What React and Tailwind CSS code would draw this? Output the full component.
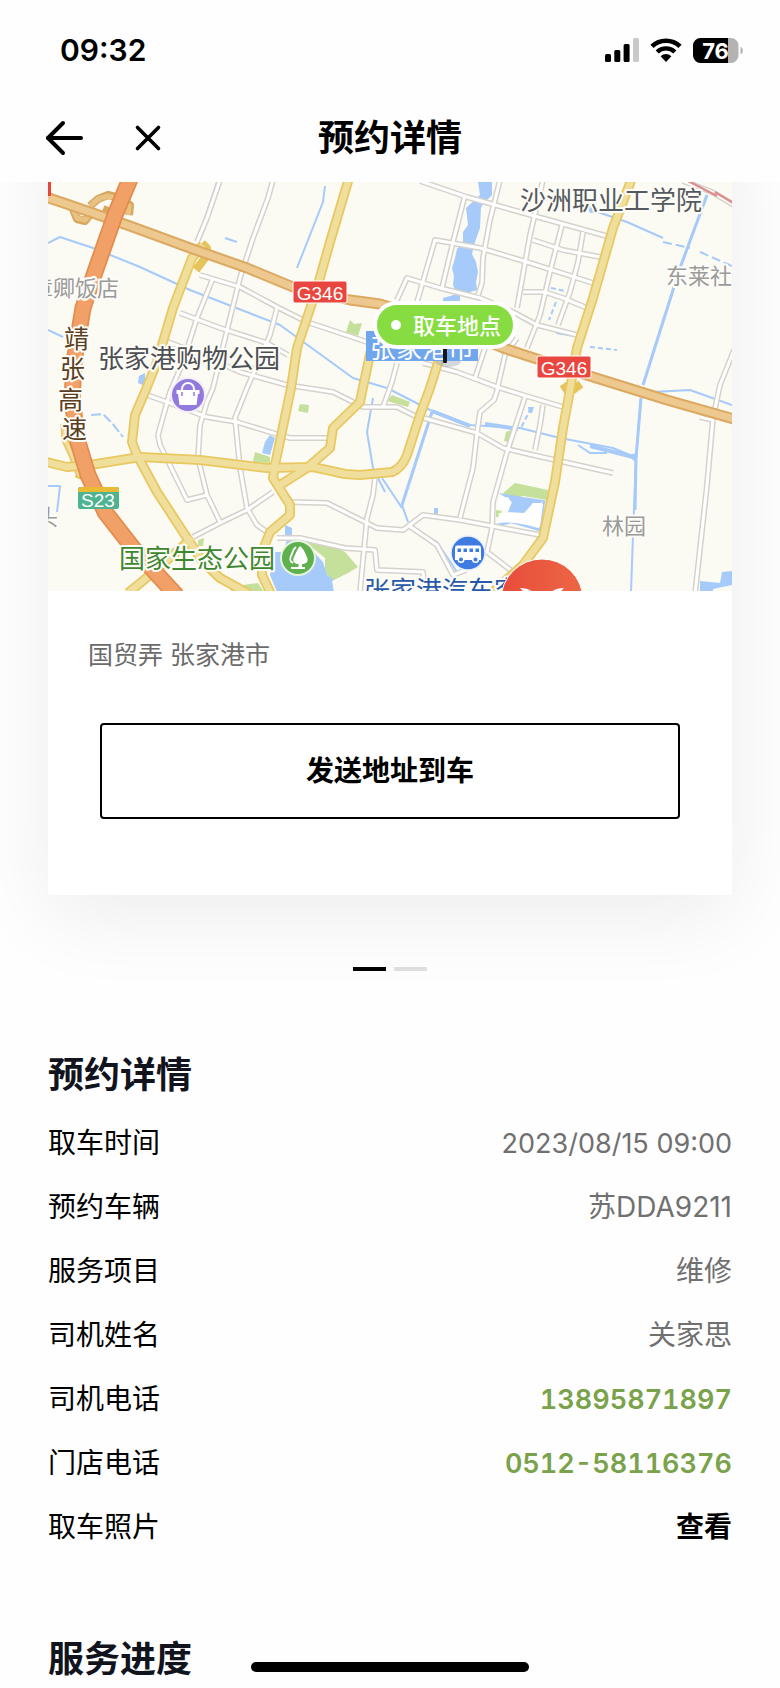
import React, { useState } from "react";

const majorRoads = [
  "M203 245 L192 258 L173 308 L157 362 L147 387 L135 415 L132 442 L137 455 L157 492 L187 538 L203 562 L220 578 L249 594",
  "M192 538 L173 555 L150 575 L128 593",
  "M46 462 L67 467 L90 465 L140 457 L200 460 L267 468 L313 467 L345 474 L360 475 L392 472 Q402 468 407 455 L420 415 L430 388 L442 350",
  "M349 178 L330 242 L317 288 L297 348 L291 388 L275 465 L273 478 L290 505 L290 515 L270 532 L262 552 L262 575 L271 594",
  "M372 345 L362 392 L360 402 L333 428 L330 448 L307 468 L280 485",
  "M632 178 L613 228 L593 298 L577 348 L570 390 L563 428 L555 482 L543 538 L523 565 L493 592",
];

const minorRoads = [
  "M220 180 L207 218 L197 242",
  "M273 180 L268 198 L253 238 L240 278 L230 318 L213 388 L207 402 L200 425 L198 458 L207 495 L220 522",
  "M200 275 L240 287 L277 307 L307 322 L367 342",
  "M180 313 L220 328 L267 343 L288 355",
  "M168 342 L207 357 L240 372 L287 385 L333 392 L363 407 L397 407 L413 415 L477 433 L503 448 L533 455 L613 473",
  "M213 278 L197 318 L183 362 L170 392 L158 435 L160 445 L187 500 L207 495",
  "M277 308 L270 335 L247 388 L235 418 L240 468 L247 508 L257 525 L267 532",
  "M147 395 L167 402 L207 417 L237 422 L273 433 L290 438 L327 438",
  "M193 537 L220 523 L247 510 L273 492",
  "M290 502 L327 503 L357 518 L377 528 L403 530 L423 515 L460 520 L540 535",
  "M277 538 L300 538 L345 548 L375 550 L377 570 L423 572 L425 592",
  "M375 478 L373 495 L367 518 L360 592",
  "M408 525 L437 545 L453 575 L466 570",
  "M498 388 L494 400 L480 412 L477 433 L473 468 L460 518",
  "M525 397 L507 452 L493 502 L492 528 L487 552 L513 572",
  "M543 405 L540 425 L535 450",
  "M423 363 L457 372 L497 387 L523 395 L563 407",
  "M420 181 L467 197 L520 212 L610 237",
  "M465 195 L453 242 L442 288",
  "M500 180 L490 220 L483 258 L482 283 L478 295",
  "M397 300 L407 278 L440 288 L480 298 L513 312 L537 325 L577 335",
  "M417 302 L435 240 L480 248 L527 262 L593 283",
  "M543 180 L530 235 L517 308",
  "M562 225 L550 272 L540 315 L527 348",
  "M583 232 L578 262 L570 292 L558 325",
  "M533 240 L563 250 L600 257",
  "M523 292 L545 292 L563 298 L587 308",
  "M517 338 L505 355 L497 390",
  "M485 348 L475 378",
  "M397 363 L392 382 L383 407",
  "M683 181 L712 192 L734 205",
  "M734 350 L720 385 L713 418 L707 485 L695 594",
  "M700 417 L713 420",
];

const streams = [
  "M48 243 L60 237 L93 248 L140 267 L190 290 L280 325 L353 378 L387 388 L430 410 L470 425 L520 428 L560 438 L613 448 L637 458",
  "M641 398 L636 458 L633 535 L631 592",
  "M707 195 L680 268 L643 385",
  "M577 190 L592 210 L627 222 L663 238",
  "M325 186 L323 202 L297 268",
  "M217 182 L197 242",
  "M225 238 L237 242",
  "M432 412 L402 505 L408 522",
  "M382 478 L402 508",
  "M373 398 L367 432 L373 468 L385 492",
  "M48 330 L63 337",
  "M48 486 L60 486 L57 512",
  "M420 532 L437 542 L457 572",
  "M653 392 L690 390 L732 405",
  "M578 445 L590 453 L607 453",
  "M556 333 L575 336",
];

const pois = [
  { text: "沙洲职业工学院", x: 520, y: 210, size: 26, color: "#555a5e" },
  { text: "张家港购物公园", x: 98, y: 368, size: 26, color: "#4b4e52" },
  { text: "章卿饭店", x: 31, y: 296, size: 22, color: "#9a9a9a" },
  { text: "东莱社", x: 666, y: 284, size: 22, color: "#9a9a9a" },
  { text: "林园", x: 602, y: 534, size: 22, color: "#9a9a9a" },
  { text: "头", x: 36, y: 525, size: 22, color: "#9a9a9a" },
  { text: "靖", x: 64, y: 348, size: 25, color: "#5a3d22" },
  { text: "张", x: 60, y: 378, size: 25, color: "#5a3d22" },
  { text: "高", x: 58, y: 409, size: 25, color: "#5a3d22" },
  { text: "速", x: 62, y: 438, size: 25, color: "#5a3d22" },
  { text: "国家生态公园", x: 119, y: 568, size: 26, color: "#3d8730" },
  { text: "张家港汽车客运站", x: 364, y: 600, size: 26, color: "#2759a8" },
];

const details = [
  { label: "取车时间", value: "2023/08/15 09:00", type: "time" },
  { label: "预约车辆", value: "苏DDA9211" },
  { label: "服务项目", value: "维修" },
  { label: "司机姓名", value: "关家思" },
  { label: "司机电话", value: "13895871897", type: "phone" },
  { label: "门店电话", value: "0512-58116376", type: "phone" },
  { label: "取车照片", value: "查看", type: "action" },
];

const StatusBar = () => (
  <div className="flex h-24 items-center justify-between pt-1 pr-9 pl-15">
    <span className="text-[30px] leading-9 font-semibold">09:32</span>
    <div className="flex items-center gap-[11px]">
      {/* signal */}
      <svg width="34" height="24" viewBox="0 0 34 24">
        <rect x="0" y="16" width="6" height="8" rx="1.5" />
        <rect x="9.3" y="12" width="6" height="12" rx="1.5" />
        <rect x="18.6" y="6" width="6" height="18" rx="1.5" />
        <rect x="28" y="0" width="6" height="24" rx="1.5" fill="#c9c9c9" />
      </svg>
      {/* wifi */}
      <svg width="32" height="24" viewBox="0 0 32 24">
        <path d="M2 8.4 A20 20 0 0 1 30 8.4" fill="none" stroke="#000" strokeWidth="4.6" />
        <path d="M7.2 14 A12.6 12.6 0 0 1 24.8 14" fill="none" stroke="#000" strokeWidth="4.4" />
        <path d="M16 24 L10.6 18.2 A8 8 0 0 1 21.4 18.2 Z" />
      </svg>
      {/* battery */}
      <svg width="51" height="25" viewBox="0 0 51 25">
        <path d="M35 0 H38 A7.5 7.5 0 0 1 45.5 7.5 V17.5 A7.5 7.5 0 0 1 38 25 H35 Z" fill="#b3b3b3" />
        <path d="M7.5 0 H35 V25 H7.5 A7.5 7.5 0 0 1 0 17.5 V7.5 A7.5 7.5 0 0 1 7.5 0 Z" />
        <path d="M47.5 8.5 A4.5 4.5 0 0 1 47.5 16.5 Z" fill="#b3b3b3" />
        <text x="22.5" y="20.5" textAnchor="middle" fontSize="22" fontWeight="700" fill="#fff">
          76
        </text>
      </svg>
    </div>
  </div>
);

const NavBar = () => (
  <nav className="grid h-[86px] grid-cols-[1fr_auto_1fr] items-center px-11 pb-[2px]">
    <div className="flex items-center gap-12">
      <button aria-label="返回" className="block">
        <svg width="42" height="36" viewBox="0 0 42 36" fill="none" stroke="#000" strokeWidth="4" strokeLinecap="round" strokeLinejoin="round">
          <path d="M19 3 L4 18 L19 33" />
          <path d="M4 18 H37" />
        </svg>
      </button>
      <button aria-label="关闭" className="block">
        <svg width="28" height="28" viewBox="0 0 28 28" fill="none" stroke="#000" strokeWidth="3.6" strokeLinecap="round">
          <path d="M3.5 3.5 L24.5 24.5 M24.5 3.5 L3.5 24.5" />
        </svg>
      </button>
    </div>
    <h1 className="text-[36px] leading-10 font-bold">预约详情</h1>
  </nav>
);

const PickupMap = () => (
  <svg viewBox="48 182 684 409" className="block w-full" strokeLinejoin="round">
    <rect x="48" y="182" width="684" height="409" fill="#fbfaf3" />

    {/* parks */}
    <g fill="#c5e09b">
      <path d="M303 540 L327 543 L345 552 L358 567 L333 582 L325 572 L325 558 Z" />
      <path d="M228 587 L258 583 L264 592 L232 592 Z" />
      <path d="M255 452 L270 457 L270 463 L253 462 Z" />
      <path d="M300 404 L309 405 L308 413 L298 411 Z" />
      <path d="M350 320 L354 324 L362 323 L358 336 L346 332 Z" />
      <path d="M392 395 L410 402 L408 407 L387 401 Z" />
      <path d="M503 493 L515 483 L548 490 L547 500 L523 496 L513 499 Z" />
      <path d="M506 432 L511 430 L508 442 L504 441 Z" />
      <path d="M496 510 L502 511 L500 517 L496 517 Z" />
      <path d="M198 540 L204 538 L203 546 L198 546 Z" />
    </g>

    {/* water */}
    <g fill="none" stroke="#a6caf9" strokeWidth="2">
      {streams.map((d, i) => (
        <path key={i} d={d} />
      ))}
      <path d="M663 242 L690 248 M700 252 L732 266" strokeDasharray="9 4" />
      <path d="M91 415 L103 414 L112 423 L123 437" strokeDasharray="10 3" />
      <path d="M551 288 L565 291 M556 302 L549 320 M590 347 L617 350 M531 408 L521 428" strokeDasharray="5 3" />
      <path d="M707 195 L680 268 L643 385" strokeWidth="3" />
      <path d="M432 412 L402 505" strokeWidth="3" />
      <path d="M641 398 L636 458 L635 510" strokeWidth="3" />
      <path d="M497 525 L512 522 L540 530 L544 500" strokeWidth="2.5" />
      <path d="M432 411 L470 426 M485 424 L518 429 M590 446 L637 458" strokeWidth="4" />
    </g>
    <g fill="#a6caf9">
      <path d="M478 182 H492 V195 L487 200 L481 207 L480 228 L475 242 L472 254 L476 262 L478 272 L476 282 L477 290 L460 295 V302 H443 V298 L457 294 L453 285 L454 276 L452 268 L455 258 L457 249 L463 242 L463 232 L468 225 L466 208 L480 195 Z" />
      <path d="M273 552 L283 552 L287 540 L307 545 L323 562 L327 575 L337 582 L334 592 H277 L270 575 Z" />
      <path d="M270 435 L275 438 L270 455 L262 453 L265 442 Z" />
      <path d="M499 493 L523 497 L543 500 L541 503 L533 503 L524 513 L508 512 L512 502 Z" />
      <path d="M722 572 L732 571 V585 L713 589 V592 H700 V581 L720 583 Z" />
      <path d="M285 525 L292 528 L292 535 L285 536 Z" />
      <path d="M434 508 H438 V514 H434 Z" />
      <path d="M528 407 L534 407 L532 413 L529 413 Z" />
      <path d="M139 376 L145 373 L145 386 L138 383 Z" />
      <path d="M588 208 L605 212 L590 213 Z" />
      <path d="M628 455 L637 453 L636 463 Z" />
    </g>
    <path d="M332 581 L346 574 L352 584 L340 592 L334 592 Z" fill="#fbfaf3" />
    <path d="M498 498 L508 497 L511 502 L507 509 L498 508 Z M499 513 L526 513 L533 503 L543 504 L540 527 L515 523 L498 522 Z" fill="#fff" />

    {/* streets */}
    <g fill="none">
      {minorRoads.map((d, i) => (
        <path key={i} d={d} stroke="#d5d2cb" strokeWidth="6" />
      ))}
      {minorRoads.map((d, i) => (
        <path key={i} d={d} stroke="#ffffff" strokeWidth="3" />
      ))}
    </g>
    <path d="M688 181 L717 196 M715 192 L733 203" stroke="#dd8f8f" strokeWidth="2.5" />

    {/* main roads */}
    <g fill="none">
      <path d="M64 424 L65 440 L72 455 L80 476 M76 474 L84 477" stroke="#e6c45c" strokeWidth="7" />
      <path d="M64 424 L65 440 L72 455 L80 476" stroke="#f0df9b" strokeWidth="4" />
      <path d="M196 270 L205 258 L207 248 L202 243 M563 384 L569 393 L581 384" stroke="#e6c45c" strokeWidth="8" />
      {majorRoads.map((d, i) => (
        <path key={i} d={d} stroke="#e8c85f" strokeWidth="10" />
      ))}
      {majorRoads.map((d, i) => (
        <path key={i} d={d} stroke="#f0df9c" strokeWidth="6.5" />
      ))}
    </g>

    {/* G346 */}
    <g fill="none">
      <path d="M72 207 L77 219 L85 221 L92 212 M90 206 L98 199 L108 195 L120 198 L130 205 L129 215 M103 209 L112 213" stroke="#d8a75e" strokeWidth="8" />
      <path d="M72 207 L77 218 L85 220 L92 212 M90 206 L98 199 L108 196 L120 199 L129 206 L128 215" stroke="#e8c283" strokeWidth="5" />
      <path d="M46 197 L90 212 L130 226 L190 248 L247 268 L293 287 L350 300 L380 304 L440 322 L503 348 L537 359 L593 377 L667 400 L734 419" stroke="#dca961" strokeWidth="11" />
      <path d="M46 197 L90 212 L130 226 L190 248 L247 268 L293 287 L350 300 L380 304 L440 322 L503 348 L537 359 L593 377 L667 400 L734 419" stroke="#edc98f" strokeWidth="7" />
    </g>

    {/* expressway */}
    <g fill="none">
      <path d="M130 179 L115 215 L95 272 L83 308 L74 362 L72 400 L78 442 L88 475 L105 512 L133 548 L177 596" stroke="#e38c4e" strokeWidth="17" />
      <path d="M130 179 L115 215 L95 272 L83 308 L74 362 L72 400 L78 442 L88 475 L105 512 L133 548 L177 596" stroke="#f1a068" strokeWidth="13.5" />
    </g>
    <rect x="48" y="182" width="3" height="14" fill="#e5453d" />

    {/* place names */}
    <g stroke="#fdfcf7" strokeWidth="4" paintOrder="stroke">
      {pois.map((poi) => (
        <text key={poi.text + poi.y} x={poi.x} y={poi.y} fontSize={poi.size} fill={poi.color}>
          {poi.text}
        </text>
      ))}
    </g>

    {/* road shields */}
    <g className="font-['Liberation_Sans',sans-serif]" fontSize="19" fill="#fff" textAnchor="middle">
      <rect x="293" y="281" width="54" height="22" rx="2" fill="#e8463f" stroke="#fff" />
      <text x="320" y="300">G346</text>
      <rect x="537" y="356" width="54" height="22" rx="2" fill="#e8463f" stroke="#fff" />
      <text x="564" y="375">G346</text>
      <rect x="78" y="487" width="41" height="22" rx="2" fill="#4db391" />
      <path d="M80 487 H117 L119 489 V492 H78 V489 Z" fill="#e9bb34" />
      <text x="98" y="507">S23</text>
    </g>

    {/* shopping */}
    <g>
      <circle cx="188" cy="395" r="17" fill="#9279dd" stroke="#f4effb" strokeWidth="2" />
      <path d="M176.5 390 H199.5 V394 H176.5 Z M178 394 H198 L196.5 405 H179.5 Z" fill="#fff" />
      <path d="M182 391 V389 A6 6 0 0 1 194 389 V391" fill="none" stroke="#fff" strokeWidth="2" />
      <path d="M182 392 V396 M194 392 V396" stroke="#9279dd" strokeWidth="1.5" />
    </g>
    {/* park */}
    <g>
      <circle cx="298" cy="558" r="17" fill="#5fb04f" stroke="#e6f4dd" strokeWidth="2" />
      <path d="M300 546 C304 549 305 553 307 557 C309 562 306 564 302 564 V568 H298.5 V564 C294 564 292 561 294 557 C296 553 297 549 300 546 Z" fill="#fff" />
      <path d="M296 547 C292 550 293 553 291 556 C289 560 291 562 293 563 M291 568 H305" fill="none" stroke="#fff" strokeWidth="1.8" />
    </g>
    {/* coach station */}
    <g>
      <circle cx="468" cy="553" r="17" fill="#3f7be0" stroke="#e8f0fd" strokeWidth="1.5" />
      <path d="M457 545.5 H479 Q481 545.5 481 548 V560 H455 V548 Q455 545.5 457 545.5 Z" fill="#fff" />
      <path d="M457.5 548.5 h3.5 v3.5 h-3.5 z M463.5 548.5 h3.5 v3.5 h-3.5 z M469.5 548.5 h3.5 v3.5 h-3.5 z M475.5 548.5 h3.5 v3.5 h-3.5 z" fill="#3f7be0" />
      <circle cx="461" cy="559.5" r="2.8" fill="#3f7be0" stroke="#fff" strokeWidth="1.5" />
      <circle cx="475.5" cy="559.5" r="2.8" fill="#3f7be0" stroke="#fff" strokeWidth="1.5" />
    </g>

    {/* selected city */}
    <ellipse cx="448" cy="361" rx="13" ry="6" fill="#8f93b8" opacity="0.35" />
    <rect x="366" y="331" width="112" height="30" fill="#70a6ec" />
    <text x="370" y="358" fontSize="26" fill="#fff">张家港市</text>
    <rect x="443" y="345" width="4" height="18" rx="1" fill="#14161c" />

    {/* pickup marker */}
    <rect x="375" y="303" width="140" height="44" rx="22" fill="#86dc40" stroke="#fff" strokeWidth="4" />
    <circle cx="396" cy="325" r="5" fill="#fff" />
    <text x="413" y="334" fontSize="22" fontWeight="500" fill="#fff">取车地点</text>

    {/* store marker */}
    <defs>
      <linearGradient id="store" x1="0" x2="1">
        <stop offset="0" stopColor="#e84c3b" />
        <stop offset="1" stopColor="#ec6744" />
      </linearGradient>
    </defs>
    <circle cx="542" cy="600" r="41" fill="url(#store)" stroke="#fff" strokeWidth="1" />
    <path d="M520 588 Q528 588 533 592 H524 Z M564 588 Q556 588 551 592 H560 Z" fill="#fff" />
  </svg>
);

const DetailValue = ({ item }) => {
  if (item.type === "phone") {
    return (
      <a href={`tel:${item.value}`} className="text-[27px] font-semibold text-[#79a24a] tabular-nums">
        {item.value}
      </a>
    );
  }
  if (item.type === "action") {
    return <button className="font-bold text-black">{item.value}</button>;
  }
  if (item.type === "time") {
    return <time className="text-[27px] text-[#707070]">{item.value}</time>;
  }
  return <span className="text-[#707070]">{item.value}</span>;
};

const App = () => {
  const [slide, setSlide] = useState(0);

  return (
    <div className="min-h-screen bg-[#fefefe] font-['Inter','Noto_Sans_CJK_SC',sans-serif] text-black">
      <header className="sticky top-0 z-10 bg-[#fefefe]">
        <StatusBar />
        <NavBar />
      </header>

      <main className="overflow-hidden px-12 pb-3">
        {/* the card continues up behind the header */}
        <section className="-mt-20 bg-white pt-20 shadow-[0_20px_80px_rgba(0,0,0,0.07)]">
          <PickupMap />
          <p className="px-10 pt-[46px] text-[25px] leading-9 text-[#6b6b6b]">国贸弄 张家港市</p>
          <div className="px-13 pt-[50px] pb-19">
            <button className="h-24 w-full rounded-sm border-2 border-black text-[28px] font-bold">
              发送地址到车
            </button>
          </div>
        </section>

        <div className="mt-18 flex justify-center gap-2">
          {[0, 1].map((i) => (
            <button
              key={i}
              aria-label={`第${i + 1}页`}
              onClick={() => setSlide(i)}
              className={`h-1 w-[33px] ${slide === i ? "bg-black" : "bg-[#dedede]"}`}
            />
          ))}
        </div>

        <section className="mt-21">
          <h2 className="text-[36px] leading-10 font-bold text-[#12141d]">预约详情</h2>
          <dl className="mt-4">
            {details.map((item) => (
              <div key={item.label} className="flex h-16 items-center justify-between text-[28px]">
                <dt>{item.label}</dt>
                <dd>
                  <DetailValue item={item} />
                </dd>
              </div>
            ))}
          </dl>
        </section>

        <section className="mt-20">
          <h2 className="text-[36px] leading-10 font-bold text-[#12141d]">服务进度</h2>
        </section>
      </main>

      {/* home indicator */}
      <div className="fixed inset-x-0 bottom-4 z-20 flex justify-center">
        <div className="h-[10px] w-[278px] rounded-full bg-black" />
      </div>
    </div>
  );
};

export default App;
